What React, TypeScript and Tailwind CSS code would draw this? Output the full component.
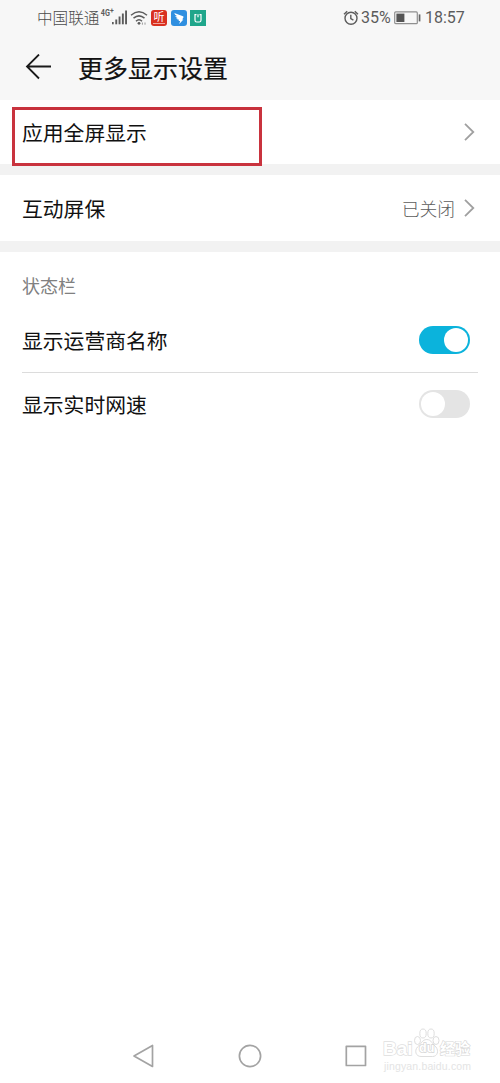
import { useState } from 'react';

function StatusBar() {
  return (
    <div className="flex h-[35px] items-center justify-between pl-[37px] pr-[35px] text-[#5c5c5c]">
      <div className="flex h-[35px] items-center">
        <span className="w-[63px] whitespace-nowrap text-[15.6px] font-light leading-none text-[#4a4a4a]">中国联通</span>
        <span className="mb-[9px] flex w-[12px] origin-left scale-x-[0.85] whitespace-nowrap pl-px font-[Roboto] text-[8.5px] font-bold leading-none">
          4G<span className="-mt-[2px] text-[8px]">+</span>
        </span>
        <svg className="h-[17px] w-[16px]" viewBox="0 0 16 17" fill="currentColor">
          <rect x="0" y="13" width="1.7" height="2.3" />
          <rect x="3.3" y="10.5" width="1.9" height="4.8" />
          <rect x="6.6" y="7.5" width="1.9" height="7.8" />
          <rect x="9.9" y="4.5" width="1.9" height="10.8" />
          <rect x="13.1" y="1.5" width="1.9" height="13.8" />
        </svg>
        <svg className="ml-[2px] h-[16px] w-[18px]" viewBox="0 0 18 16" fill="none" stroke="currentColor" strokeWidth="1.5">
          <path d="M1 5.2Q9-1.6 17 5.2" />
          <path d="M3.5 8.2Q9 3.6 14.5 8.2" />
          <path d="M6 11.2Q9 8.4 12 11.2" />
          <circle cx="9" cy="13.3" r="1.4" fill="currentColor" stroke="none" />
          <path d="M12.4 12.5V14.7M15 12.5V14.7" strokeWidth="1" opacity="0.6" />
        </svg>
        <div className="ml-[3px] flex h-[16px] w-[16px] flex-col items-center rounded-[3px] bg-[#d9301f] text-white">
          <span className="mt-px text-[11px] leading-[11px]">听</span>
          <span className="mt-px h-[1.5px] w-[12px] bg-[#f2a59c]" />
        </div>
        <svg className="ml-[4px] h-[16px] w-[16px]" viewBox="0 0 16 16">
          <rect width="16" height="16" rx="3" fill="#2f8fe0" />
          <path d="M3.3 3L12 6.2Q12.8 6.6 12.4 7.5L11.2 9.6H12.4L8.3 14L9.1 11.1H7.6L8 9.8Q5.8 9.4 5.2 8.3L7 8.3Q4.6 7.4 4.2 6L6.3 6.3Q3.4 4.8 3.3 3Z" fill="white" />
        </svg>
        <svg className="ml-[3px] h-[16px] w-[16px]" viewBox="0 0 16 16">
          <rect width="16" height="16" fill="#1fa68b" />
          <path d="M6.5 4.6H5V10.2Q5 12 6.8 12H9.2Q11 12 11 10.2V4.6H9.5M8 4.2V7.2" fill="none" stroke="white" strokeWidth="1.2" />
        </svg>
      </div>
      <div className="flex items-center font-[Roboto]">
        <svg className="h-[16px] w-[16px]" viewBox="0 0 16 16" fill="none" stroke="currentColor" strokeWidth="1.4">
          <circle cx="8" cy="8.3" r="6" />
          <path d="M1 4.2L4.2 1.2M15 4.2L11.8 1.2M7.8 4.8V8.6L10.4 10.2" />
        </svg>
        <span className="ml-[2px] w-[33px] text-[16px] leading-none">35%</span>
        <svg className="h-[14px] w-[27px]" viewBox="0 0 27 14" fill="none">
          <rect x="0.7" y="0.9" width="22.6" height="11.8" rx="1" stroke="#909090" strokeWidth="1.2" />
          <rect x="2.4" y="2.6" width="8" height="8.4" fill="#555" />
          <rect x="24.7" y="3.4" width="1.7" height="7" fill="#666" />
        </svg>
        <span className="ml-[4px] w-[40px] whitespace-nowrap text-[16px] leading-none">18:57</span>
      </div>
    </div>
  );
}

function Chevron() {
  return (
    <svg className="h-[20px] w-[12px]" viewBox="0 0 12 20" fill="none" stroke="#a0a0a0" strokeWidth="1.8">
      <path d="M1 1.8L9.3 10L1 18.2" />
    </svg>
  );
}

function Toggle({ on, label, onChange }: { on: boolean; label: string; onChange: () => void }) {
  return (
    <button
      role="switch"
      aria-checked={on}
      aria-label={label}
      onClick={onChange}
      className={`flex h-[28px] w-[51px] items-center rounded-full px-[2px] ${
        on ? 'justify-end bg-[#0bb3dc]' : 'justify-start bg-[#e4e4e4]'
      }`}
    >
      <span className="h-[24px] w-[24px] rounded-full bg-white" />
    </button>
  );
}

function Watermark() {
  return (
    <div className="absolute left-[383px] top-[1027px] flex w-[92px] flex-col font-['Liberation_Sans','Noto_Sans_CJK_SC',sans-serif] text-white">
      <div className="flex h-[32px] items-end">
        <span className="w-[30px] text-[19px] font-bold leading-[21px] [paint-order:stroke] [-webkit-text-stroke:1.4px_#dedede]">Bai</span>
        <div className="relative h-[32px] w-[27px]">
          <svg className="h-[32px] w-[27px]" viewBox="0 0 27 32" fill="white" stroke="#dedede" strokeWidth="1">
            <ellipse cx="10" cy="6.5" rx="3.2" ry="4.5" />
            <ellipse cx="18" cy="6.5" rx="3.2" ry="4.5" />
            <ellipse cx="4.5" cy="13.5" rx="3" ry="4" />
            <ellipse cx="23" cy="13.5" rx="3" ry="4" />
            <path d="M13.8 12.5C9 12.5 8 17.5 4.5 20C1 24 3 29.5 8 29.5H19.5C24.5 29.5 26 24 23 20C19.5 17.5 18.5 12.5 13.8 12.5Z" />
          </svg>
          <span className="absolute left-[6px] top-[13px] text-[12.5px] font-bold leading-[16px] [paint-order:stroke] [-webkit-text-stroke:1.4px_#d4d4d4]">du</span>
        </div>
        <span className="whitespace-nowrap text-[15px] font-bold leading-[21px] [paint-order:stroke] [-webkit-text-stroke:1.2px_#d8d8d8]">经验</span>
      </div>
      <span className="pl-px pt-px text-[10.5px] leading-[13px] tracking-[0.15px] text-[#e4e4e4]">jingyan.baidu.com</span>
    </div>
  );
}

export default function App() {
  const [showCarrier, setShowCarrier] = useState(true);
  const [showSpeed, setShowSpeed] = useState(false);

  return (
    <div className="relative flex h-[1083px] w-[500px] flex-col overflow-hidden bg-white font-['Noto_Sans_CJK_SC',sans-serif] text-[20.8px] text-[#111]">
      <header className="h-[100px] bg-[#f7f7f7]">
        <StatusBar />
        <div className="flex h-[64px] items-center pl-[25px]">
          <svg className="h-[26px] w-[27px]" viewBox="0 0 27 26" fill="none" stroke="#1a1a1a" strokeWidth="1.8">
            <path d="M26 12.5H2M14 0.5L2 12.5L14 24.5" />
          </svg>
          <h1 className="ml-[26px] text-[25px] font-normal leading-none [-webkit-text-stroke:0.2px_#111]">更多显示设置</h1>
        </div>
      </header>

      <main className="flex-1">
        <div className="flex h-[64px] items-center justify-between pl-[12px] pr-[24px]">
          <div className="mt-[9px] flex h-[59px] w-[250px] items-start border-[3px] border-[#c9333e] pl-[7px] pt-[12px]">
            <span className="leading-none">应用全屏显示</span>
          </div>
          <Chevron />
        </div>
        <div className="h-[11px] bg-[#f2f2f2]" />

        <div className="flex h-[66px] items-center justify-between pl-[22px] pr-[24px]">
          <span className="leading-none">互动屏保</span>
          <div className="flex items-center gap-[9px] text-[17.8px] text-[#5c5c5c]">
            <span className="pt-[2px] font-light leading-none">已关闭</span>
            <Chevron />
          </div>
        </div>
        <div className="h-[11px] bg-[#f2f2f2]" />

        <h2 className="flex h-[56px] items-end px-[22px] pb-[14px] text-[18px] leading-none text-[#808080]">状态栏</h2>
        <div className="mx-[22px] flex h-[65px] items-center justify-between border-b border-[#dcdcdc] pr-[8px]">
          <span className="leading-none">显示运营商名称</span>
          <Toggle on={showCarrier} label="显示运营商名称" onChange={() => setShowCarrier(!showCarrier)} />
        </div>
        <div className="mx-[22px] flex h-[62px] items-center justify-between pr-[8px]">
          <span className="leading-none">显示实时网速</span>
          <Toggle on={showSpeed} label="显示实时网速" onChange={() => setShowSpeed(!showSpeed)} />
        </div>
      </main>

      <nav className="flex h-[54px] items-center justify-center gap-[82px] pr-[1px]">
        <svg className="h-[24px] w-[24px]" viewBox="0 0 24 24" fill="none" stroke="#a3a3a3" strokeWidth="1.7" strokeLinejoin="round">
          <path d="M20.5 1.5V22.5L2 12Z" />
        </svg>
        <svg className="h-[24px] w-[24px]" viewBox="0 0 24 24" fill="none" stroke="#a3a3a3" strokeWidth="1.7">
          <circle cx="12" cy="12" r="10.6" />
        </svg>
        <svg className="h-[24px] w-[24px]" viewBox="0 0 24 24" fill="none" stroke="#a3a3a3" strokeWidth="1.7" strokeLinejoin="round">
          <rect x="2.3" y="2.3" width="19.2" height="19.2" />
        </svg>
      </nav>
      <Watermark />
    </div>
  );
}
